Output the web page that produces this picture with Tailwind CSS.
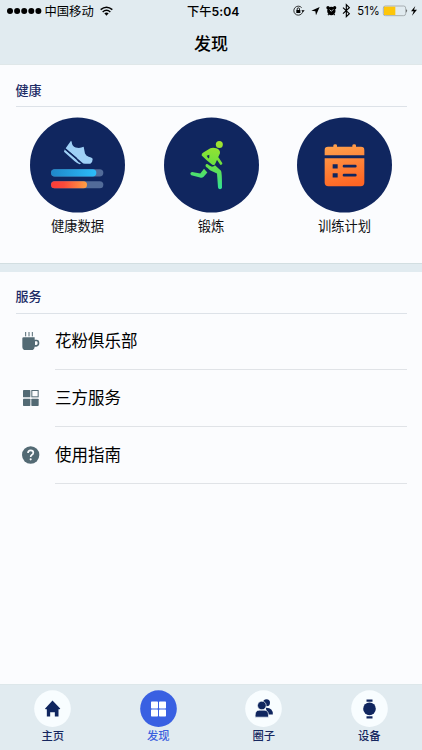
<!DOCTYPE html>
<html lang="zh-CN">
<head>
<meta charset="utf-8">
<title>发现</title>
<script src="https://cdn.jsdelivr.net/npm/@tailwindcss/browser@4"></script>
</head>
<body class="flex h-[750px] w-[422px] flex-col overflow-hidden bg-[#fbfcfe] font-['Noto_Sans_CJK_SC',sans-serif] text-[#101114]">
<header class="h-[65px] shrink-0 border-b border-[#dfe7e9] bg-[#e1ebf0]">
  <div class="grid h-[21px] grid-cols-[187px_1fr_130px] items-center text-black">
    <div class="flex items-center pl-[7px]">
      <svg class="h-[6px] w-[35px]" viewBox="0 0 35 6"><circle cx="3" cy="3" r="3"/><circle cx="10.1" cy="3" r="3"/><circle cx="17.2" cy="3" r="3"/><circle cx="24.3" cy="3" r="3"/><circle cx="31.4" cy="3" r="3"/></svg>
      <span class="ml-[2.5px] text-[12.3px] leading-[20px]">中国移动</span>
      <svg class="ml-[6px] h-[10px] w-[13px]" viewBox="0 0 39 30" fill="none" stroke="#000" stroke-width="4.500"><path d="M2 11Q19.500-4 37 11M8 18Q19.500 8 31 18"/><path d="M13 22Q19.500 17 26 22L19.500 29Z" fill="#000" stroke="none"/></svg>
    </div>
    <div class="whitespace-nowrap text-[12.2px] leading-[20px] font-medium">下午<span class="font-['Inter'] font-semibold text-[12.2px] tracking-[.1px]">5:04</span></div>
    <svg class="h-[22px] w-[130px]" viewBox="0 0 390 66">
      <circle cx="19" cy="32" r="13.500" fill="none" stroke="#111" stroke-width="2.500" stroke-dasharray="73 12"/>
      <path d="M28 31h10l-5 6z"/><rect x="13" y="30" width="12" height="9"/><path d="M15.500 31v-4a3.500 3.500 0 0 1 7 0v4" fill="none" stroke="#000" stroke-width="2.500"/>
      <path d="M83 21L58 32l12 2 2 12z"/>
      <circle cx="118" cy="33" r="12.500"/><circle cx="108" cy="23" r="5"/><circle cx="128" cy="23" r="5"/><path d="M110 43l-2 2M126 43l2 2" stroke="#000" stroke-width="4"/><path d="M113 29l5 5 6-6" stroke="#e1ebf0" stroke-width="2.500" fill="none"/>
      <path d="M153 23l19 18-9 9V14l9 9-19 18" fill="none" stroke="#000" stroke-width="3.500"/>
      <text x="196" y="45" font-family="Inter" font-size="35" textLength="67" lengthAdjust="spacingAndGlyphs">51%</text>
      <rect x="274" y="18" width="67" height="29" rx="6" fill="none" stroke="#8b9294" stroke-width="2"/>
      <path d="M276 20h34v25h-34z" fill="#fdc60a"/><path d="M343 27q5 5 0 11z" fill="#333"/>
      <path d="M370 18L357 34h8l-5 13 15-18h-9z"/>
    </svg>
  </div>
  <h1 class="text-center text-[17px] leading-[43px] font-medium text-black">发现</h1>
</header>

<section class="h-[198px] shrink-0 px-[15.5px]">
  <h2 class="h-[42px] border-b border-[#dde2e8] pt-[14.5px] text-[13px] leading-[20px] font-medium text-[#1c2b66]">健康</h2>
  <div class="mt-[10px] flex justify-between px-[14.500px]">
    <div class="flex w-[95px] flex-col items-center">
      <svg class="h-[96px] w-[95px]" viewBox="30 20.500 285 288">
        <defs>
          <linearGradient id="blue"><stop stop-color="#1f87c9"/><stop offset="1" stop-color="#2cbcfa"/></linearGradient>
          <linearGradient id="red"><stop stop-color="#fb3c39"/><stop offset=".35" stop-color="#fb4a3b"/><stop offset="1" stop-color="#fea044"/></linearGradient>
        </defs>
        <circle cx="172.500" cy="164.500" r="142.500" fill="#10265f"/>
        <path d="M153 92L137 114L186 157Q189 161 195 161H211Q218 156 218 147Q217 142 206 140Q198 137 195 130L191 110Q180 115 167 112Q156 109 155 95Z" fill="#9fd0f6"/>
        <path d="M134 118L168 147Q173 155 183 160L179 162Q171 159 164 153L132 125Z" fill="#9fd0f6"/>
        <path d="M136 117l34 28" stroke="#10265f" stroke-width="3.500"/>
        <rect x="93" y="177" width="157" height="22" rx="11" fill="#526b99"/><rect x="93" y="177" width="136" height="22" rx="11" fill="url(#blue)"/>
        <rect x="93" y="213" width="157" height="21" rx="10.500" fill="#526b99"/><rect x="93" y="213" width="108" height="21" rx="10.500" fill="url(#red)"/>
      </svg>
      <span class="mt-[3px] text-[13.3px] leading-[20px] whitespace-nowrap">健康数据</span>
    </div>
    <div class="flex w-[95px] flex-col items-center">
      <svg class="h-[96px] w-[95px]" viewBox="40 20.500 285 288">
        <defs><linearGradient id="green" gradientUnits="userSpaceOnUse" x1="200" y1="92" x2="180" y2="238"><stop stop-color="#a4e32e"/><stop offset=".45" stop-color="#70e13d"/><stop offset="1" stop-color="#2cdf9b"/></linearGradient></defs>
        <circle cx="182.500" cy="164.500" r="142.500" fill="#10265f"/>
        <circle cx="206" cy="103" r="10.500" fill="url(#green)"/>
        <path d="M158 127L179 114Q187 111 197 114Q209 118 208 129L193 162Q188 168 181 161L169 151L153 136Q152 130 158 127Z" fill="url(#green)"/>
        <path d="M168 137l8-3 0 8-3 3z" fill="#10265f"/>
        <path d="M201 145L211 160" fill="none" stroke="url(#green)" stroke-width="8" stroke-linecap="round"/>
        <path d="M166 162Q170 160 175 165L184 170Q190 169 193 165Q203 174 211 182Q214 186 214 233Q213 237 208 237Q203 237 202 232L199 190L178 180L169 172Q162 168 166 162Z" fill="url(#green)"/>
        <path d="M160 176L170 187L159 200Q154 204 148 202L122 195Q117 192 120 188Q122 185 128 186L149 190Z" fill="url(#green)"/>
      </svg>
      <span class="mt-[3px] text-[13.3px] leading-[20px] whitespace-nowrap">锻炼</span>
    </div>
    <div class="flex w-[95px] flex-col items-center">
      <svg class="h-[96px] w-[95px]" viewBox="37 20.500 285 288">
        <defs><linearGradient id="orange" gradientUnits="userSpaceOnUse" x1="160" y1="102" x2="190" y2="228"><stop stop-color="#fea04c"/><stop offset="1" stop-color="#ff6523"/></linearGradient></defs>
        <circle cx="179.500" cy="164.500" r="142.500" fill="#10265f"/>
        <path d="M120 135V120Q120 110 130 110H146V106Q146 102 152 102Q157 102 157 106V110H203V106Q203 102 209 102Q214 102 214 106V110H229Q239 110 239 120V135ZM120 144H239V217Q239 228 228 228H131Q120 228 120 217Z" fill="url(#orange)"/>
        <path d="M144 162h15v13h-15zM144 189h15v13h-15z" fill="#10265f"/>
        <path d="M178 168h34M178 195h34" stroke="#10265f" stroke-width="8" stroke-linecap="round"/>
      </svg>
      <span class="mt-[3px] text-[13.3px] leading-[20px] whitespace-nowrap">训练计划</span>
    </div>
  </div>
</section>
<div class="h-[9px] shrink-0 border-t border-[#d2dee1] bg-[#e1ebf0]"></div>

<section class="flex-1 px-[15.5px]">
  <h2 class="h-[42px] border-b border-[#dde2e8] pt-[14px] text-[13px] leading-[20px] font-medium text-[#1c2b66]">服务</h2>
  <ul class="text-[16.5px] leading-[24px] text-black">
    <li class="flex h-[56px] items-center">
      <svg class="mb-[2px] ml-[6px] h-[20px] w-[18px]" viewBox="65 228 54 60"><path d="M66 250Q66 247 70 247H103V254H109Q117 254 117 264T108 275H103Q102 285 93 285H76Q66 285 66 275ZM104 259V270H108Q112 270 112 264T108 259Z" fill="#536a74" fill-rule="evenodd"/><path d="M76 231v13M86 231v13M96 231v13" fill="none" stroke="#536a74" stroke-width="3"/></svg>
      <div class="ml-[15.5px] flex h-full flex-1 items-center border-b border-[#e0e3e7] pb-[3px]">花粉俱乐部</div>
    </li>
    <li class="flex h-[57px] items-center">
      <svg class="mb-[2px] ml-[6px] h-[18px] w-[18px]" viewBox="65 42 54 54"><g fill="#536a74"><rect x="68" y="45" width="22" height="22" rx="2"/><rect x="68" y="71" width="22" height="22" rx="2"/><rect x="93" y="71" width="22" height="22" rx="2"/></g><rect x="94.500" y="46.500" width="19" height="19" fill="none" stroke="#536a74" stroke-width="3"/></svg>
      <div class="ml-[15.5px] flex h-full flex-1 items-center border-b border-[#e0e3e7] pb-[2px]">三方服务</div>
    </li>
    <li class="flex h-[57px] items-center">
      <svg class="mb-[2px] ml-[6px] h-[18px] w-[18px]" viewBox="0 0 54 54"><circle cx="26" cy="27" r="26" fill="#536a74"/><path d="M18 21Q18 13 26 13Q34 13 34 20Q34 24 29 27Q26 29 26 33" fill="none" stroke="#fbfcfe" stroke-width="5"/><circle cx="26" cy="40" r="3.200" fill="#fbfcfe"/></svg>
      <div class="ml-[15.5px] flex h-full flex-1 items-center border-b border-[#e0e3e7] pb-[2px]">使用指南</div>
    </li>
  </ul>
</section>

<nav class="grid h-[66px] shrink-0 grid-cols-4 border-t border-[#dde7ea] bg-[#e1ebf0] pt-[5px] text-[11.3px] leading-[16px] font-medium text-[#16275f]">
  <div class="flex flex-col items-center">
    <svg class="h-[37px] w-[37px]" viewBox="104.500 46.500 111 111"><circle cx="160" cy="102.500" r="55" fill="#f8fdff"/><path d="M160 78L183 102Q184 105 178 104V126H167V113H153V126H143V104Q136 105 138 102Z" fill="#10265f"/></svg>
    <span>主页</span>
  </div>
  <div class="flex flex-col items-center text-[#3c61de]">
    <svg class="h-[37px] w-[37px]" viewBox="420 46.500 111 111"><circle cx="475.500" cy="102.500" r="55" fill="#3960e2"/><g fill="#fff"><rect x="453" y="81" width="21" height="21" rx="2"/><rect x="477" y="81" width="21" height="21" rx="2"/><rect x="453" y="105" width="21" height="21" rx="2"/><rect x="477" y="105" width="21" height="21" rx="2"/></g></svg>
    <span>发现</span>
  </div>
  <div class="flex flex-col items-center">
    <svg class="h-[37px] w-[37px]" viewBox="103.500 46.500 111 111"><circle cx="159" cy="102.500" r="55" fill="#f8fdff"/><g fill="#10265f"><circle cx="168" cy="85" r="10.500"/><path d="M166 100Q187 99 187 120H170Z"/></g><g fill="#10265f" stroke="#f8fdff" stroke-width="2"><circle cx="154" cy="93" r="13"/><path d="M134 128V122Q134 107 147 107H161Q174 107 174 122V128Z"/></g></svg>
    <span>圈子</span>
  </div>
  <div class="flex flex-col items-center">
    <svg class="h-[37px] w-[37px]" viewBox="418.500 46.500 111 111"><circle cx="474" cy="102.500" r="55" fill="#f8fdff"/><g fill="#10265f"><circle cx="474" cy="103" r="19"/><path d="M465 75h18v7h-18zM465 125h18v7h-18z"/></g></svg>
    <span>设备</span>
  </div>
</nav>
</body>
</html>
